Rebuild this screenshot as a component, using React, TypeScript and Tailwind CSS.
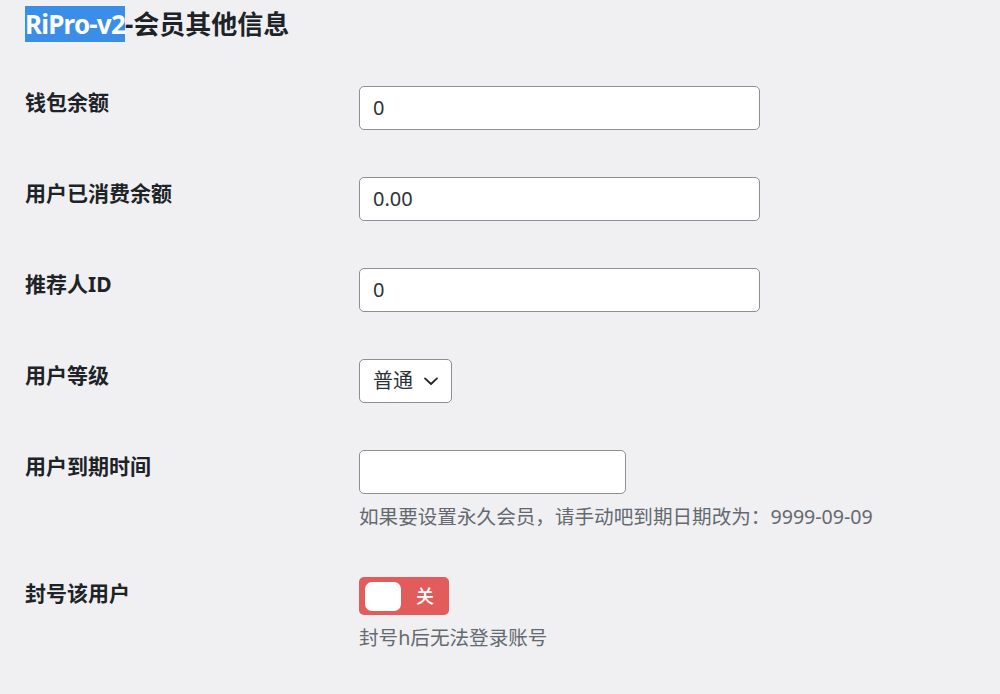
import React from "react";

const font = { fontFamily: '"Noto Sans", "Noto Sans CJK SC", sans-serif' };

function Row({
  label,
  children,
}: {
  label: string;
  children: React.ReactNode;
}) {
  return (
    <div className="flex items-start">
      <div className="w-[334px] shrink-0 pt-[2px] text-[21px] leading-[28px] font-bold text-[#1d2327]">
        {label}
      </div>
      <div className="flex flex-col items-start">{children}</div>
    </div>
  );
}

function TextInput({ value, width }: { value: string; width: string }) {
  return (
    <div
      className={`${width} flex h-[44px] items-center rounded-[5px] border border-[#8c8f94] bg-white px-[13px] text-[20px] text-[#2c3338]`}
    >
      {value}
    </div>
  );
}

function Description({ children }: { children: React.ReactNode }) {
  return (
    <p className="mt-[10px] text-[19.6px] leading-[26px] text-[#646970]">
      {children}
    </p>
  );
}

export default function App() {
  return (
    <div
      className="min-h-[694px] w-full bg-[#f0f0f2] pt-[8px] pl-[25px]"
      style={font}
    >
      <h2 className="text-[26px] leading-[32px] font-bold text-[#1d2327]">
        <span className="bg-[#3a8ee8] tracking-[-0.8px] text-white">
          RiPro-v2
        </span>
        -会员其他信息
      </h2>

      <div className="mt-[46px] flex flex-col gap-[47px]">
        <Row label="钱包余额">
          <TextInput value="0" width="w-[401px]" />
        </Row>
        <Row label="用户已消费余额">
          <TextInput value="0.00" width="w-[401px]" />
        </Row>
        <Row label="推荐人ID">
          <TextInput value="0" width="w-[401px]" />
        </Row>
        <Row label="用户等级">
          <div className="flex h-[44px] w-[93px] items-center gap-[9px] rounded-[5px] border border-[#8c8f94] bg-white pl-[13px] text-[20px] text-[#2c3338]">
            <span>普通</span>
            <svg
              width="18"
              height="18"
              viewBox="0 0 24 24"
              fill="none"
              stroke="#1d2327"
              strokeWidth="2.4"
              strokeLinecap="round"
              strokeLinejoin="round"
            >
              <path d="M4 8.5l8 7.5 8-7.5" />
            </svg>
          </div>
        </Row>
        <Row label="用户到期时间">
          <TextInput value="" width="w-[267px]" />
          <Description>
            如果要设置永久会员，请手动吧到期日期改为：9999-09-09
          </Description>
        </Row>
        <Row label="封号该用户">
          <div className="flex h-[38px] w-[90px] items-center rounded-[5px] bg-[#e25c5c] pl-[6px]">
            <div className="h-[29px] w-[36px] rounded-[7px] bg-white" />
            <span className="ml-[15px] text-[18px] font-medium text-white">
              关
            </span>
          </div>
          <Description>封号h后无法登录账号</Description>
        </Row>
      </div>
    </div>
  );
}
